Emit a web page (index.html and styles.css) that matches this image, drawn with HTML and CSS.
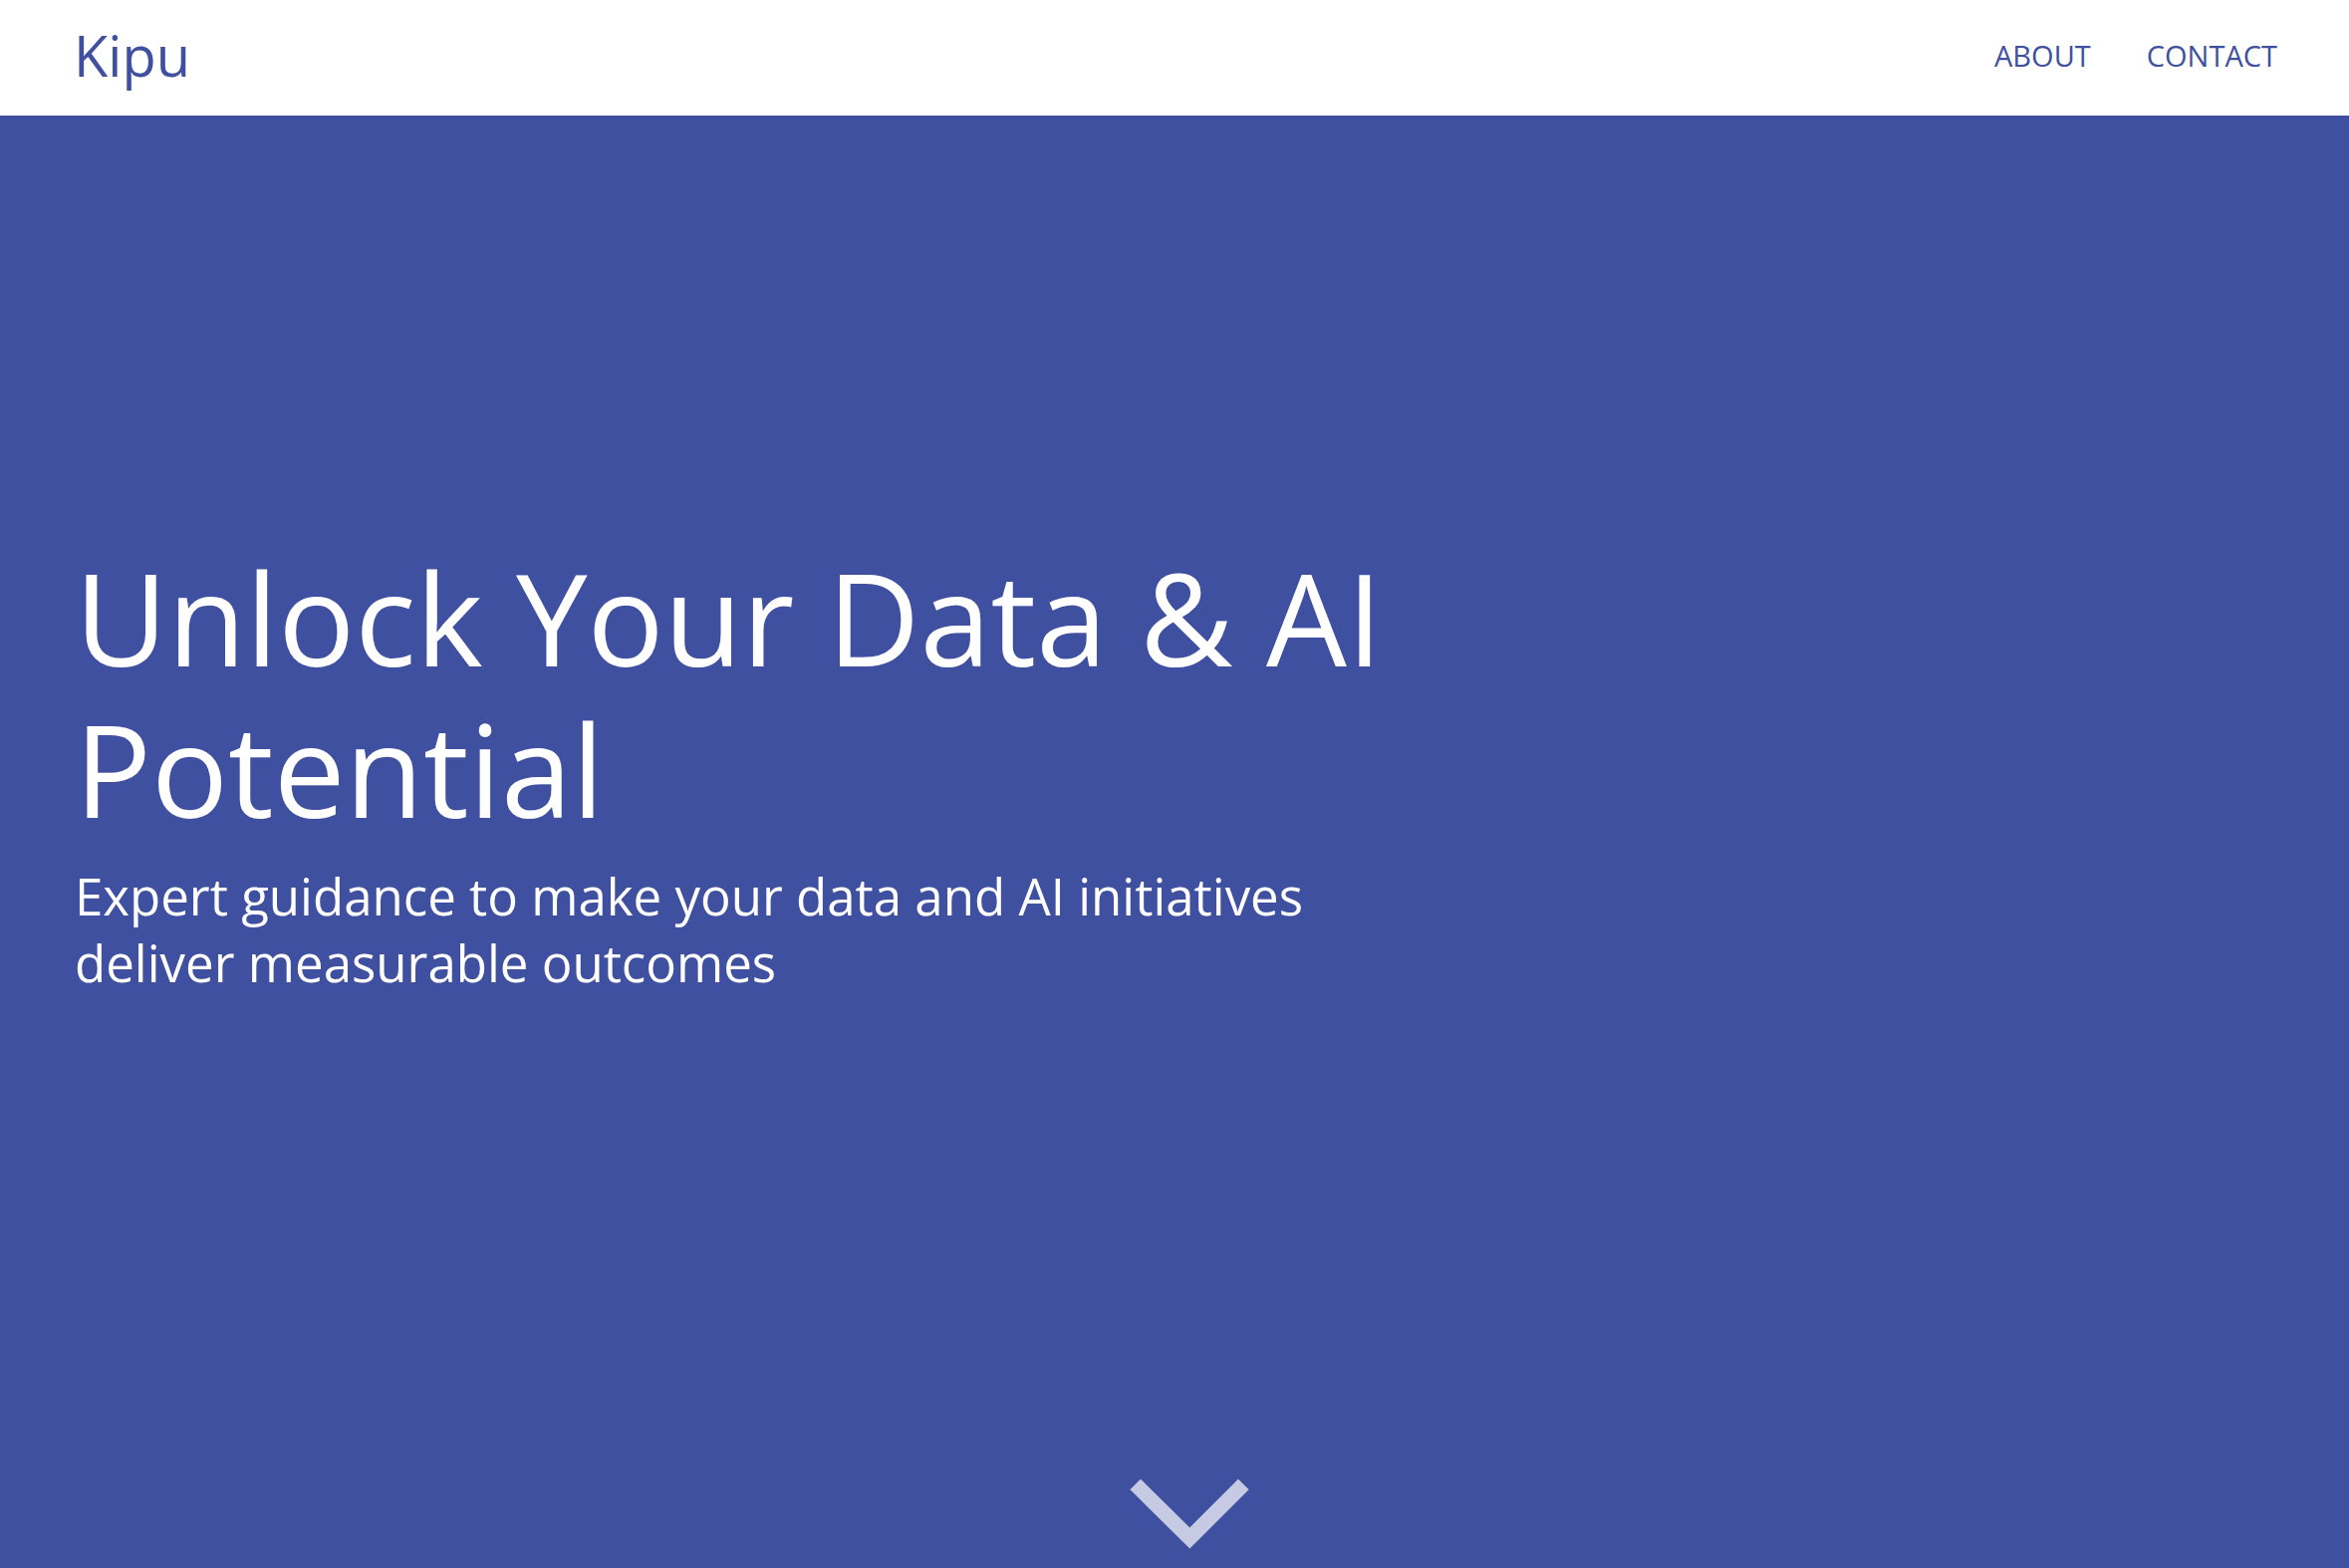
FILE: index.html
```html
<!DOCTYPE html>
<html lang="en">
<head>
<meta charset="utf-8">
<title>Kipu</title>
<link rel="stylesheet" href="styles.css">
</head>
<body>
<header class="site-header">
  <a class="logo" href="#">Kipu</a>
  <nav class="nav">
    <a class="nav-link" href="#about">ABOUT</a>
    <a class="nav-link" href="#contact">CONTACT</a>
  </nav>
</header>
<main class="hero">
  <div class="hero-content">
    <h1 class="hero-title">Unlock Your Data &amp; AI Potential</h1>
    <p class="hero-sub">Expert guidance to make your data and AI initiatives deliver measurable outcomes</p>
  </div>
  <a class="scroll-down" href="#about" aria-label="Scroll down">
    <svg width="130" height="90" viewBox="0 0 130 90">
      <polyline points="10.7,10 65.3,64 119.3,10" fill="none" stroke="rgba(255,255,255,0.7)" stroke-width="15" stroke-linejoin="miter" stroke-linecap="butt"/>
    </svg>
  </a>
</main>
</body>
</html>
```
FILE: styles.css
```css
html, body {
  margin: 0;
  padding: 0;
}
body {
  font-family: "Open Sans", "Noto Sans", sans-serif;
  background: #4050a0;
  overflow: hidden;
}
.site-header {
  height: 116px;
  background: #ffffff;
  display: flex;
  align-items: center;
  justify-content: space-between;
  padding: 0 72px 0 74px;
  box-sizing: border-box;
}
.logo {
  color: #4050a0;
  text-decoration: none;
  font-size: 56px;
  line-height: 1;
  margin-bottom: 6px;
}
.nav {
  display: flex;
  gap: 56px;
  margin-bottom: 5px;
}
.nav-link {
  color: #4050a0;
  text-decoration: none;
  font-size: 29px;
  line-height: 1;
}
.hero {
  position: relative;
  height: calc(100vh - 116px);
  background: #4050a0;
  color: #ffffff;
  box-sizing: border-box;
  padding: 428px 75px 0;
}
.hero-content {
  max-width: 1340px;
}
.hero-title {
  margin: 0;
  font-weight: 400;
  font-size: 128px;
  line-height: 152px;
}
.hero-sub {
  margin: 18px 0 0;
  font-size: 51px;
  line-height: 67px;
  font-weight: 400;
}
.scroll-down {
  position: absolute;
  left: 1129px;
  top: 1364px;
  display: block;
  width: 130px;
  height: 90px;
}
.scroll-down svg {
  display: block;
}
```
